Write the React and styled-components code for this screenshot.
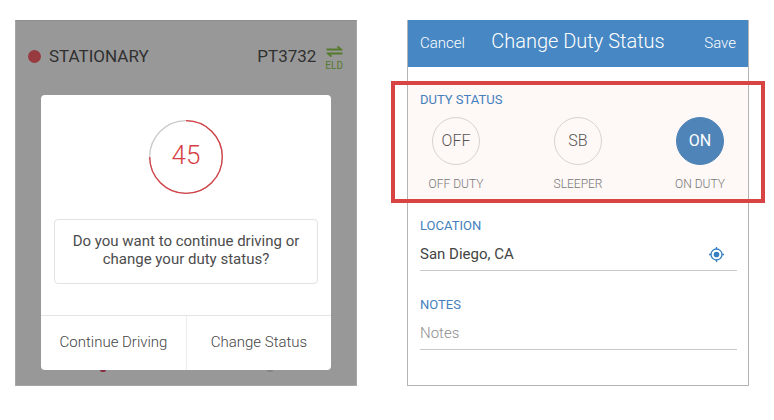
import { useState } from 'react'
import styled, { createGlobalStyle } from 'styled-components'


const GlobalStyle = createGlobalStyle`
  * {
    box-sizing: border-box;
  }

  body {
    margin: 0;
    background: white;
    font-family: Roboto, 'Liberation Sans', sans-serif;
  }

  button, input {
    font-family: inherit;
  }
`

const Page = styled.main`
  display: grid;
  grid-template-columns: 1fr 1fr;
  gap: 50px;
  padding: 20px 25px 20px 15px;
`

// Driving prompt

const DrivingScreen = styled.section`
  display: flex;
  flex-direction: column;
  padding: 0 25px 13px;
  background: #989898;
  border: 1px solid #a6a6a6;
  border-top-color: #8e8e8e;
`

const StatusBar = styled.header`
  display: flex;
  align-items: center;
  margin: 0 -13px;
  padding: 0 1px 4px 0;
  height: 74px;
  color: #303030;
  font-size: 17px;
`

const StatusDot = styled.span`
  width: 13px;
  height: 13px;
  margin-right: 8px;
  border-radius: 999px;
  background: #983b40;
`

const Vehicle = styled.span`
  margin-left: auto;
`

const Eld = styled.span`
  display: flex;
  flex-direction: column;
  align-items: center;
  gap: 3px;
  margin-left: 9px;
  padding-top: 6px;
  color: #557a2c;
  font-size: 10px;
  line-height: 12px;
`

const Dialog = styled.div`
  display: flex;
  flex-direction: column;
  align-items: center;
  padding-top: 25px;
  background: white;
  border-radius: 4px;
`

const Timer = styled.div`
  display: grid;
  place-items: center;
  width: 74px;
  height: 74px;
  color: #d63f45;
  font-size: 26px;
  font-weight: 300;

  svg, span {
    grid-area: 1 / 1;
  }

  span {
    padding-bottom: 5px;
  }
`

const Question = styled.p`
  align-self: stretch;
  margin: 25px 13px 31px;
  padding: 12px 16px 15px;
  border: 1px solid #e2e2e2;
  border-radius: 4px;
  color: #4c4c4c;
  font-size: 15px;
  line-height: 18px;
  text-align: center;
`

const Actions = styled.div`
  display: grid;
  grid-template-columns: 1fr 1fr;
  align-self: stretch;
  border-top: 1px solid #e4e4e4;
`

const Action = styled.button`
  height: 54px;
  padding: 0 0 3px;
  border: 0;
  background: none;
  color: #444;
  font-size: 15px;
  font-weight: 300;

  & + & {
    border-left: 1px solid #ececec;
  }
`

const Tips = styled.div`
  display: flex;
  justify-content: space-between;
  padding: 0 58px 0 59px;
`

const Tip = styled.span`
  width: 6px;
  height: 2px;
  border-radius: 0 0 4px 4px;
  background: ${({ $color }) => $color};
`

// Duty status form

const FormScreen = styled.form`
  padding-bottom: 35px;
  border: 1px solid #b4b4b4;
`

const TitleBar = styled.header`
  display: grid;
  grid-template-columns: 1fr auto 1fr;
  align-items: center;
  height: 47px;
  margin: -1px 0 14px;
  padding: 0 12px 2px;
  background: #4787c3;
  color: white;
`

const Title = styled.h1`
  margin: 0;
  padding-bottom: 3px;
  font-size: 20px;
  font-weight: 300;
`

const BarButton = styled.button`
  justify-self: ${({ $side }) => $side};
  padding: 0;
  border: 0;
  background: none;
  color: white;
  font-size: 15px;
  font-weight: 300;
`

const DutyStatus = styled.fieldset`
  position: relative;
  min-width: 0;
  margin: 0;
  padding: 11px 12px;
  border: 0;
  background: #fef8f6;

  // frame hangs out over both edges of the screen
  &::after {
    content: '';
    position: absolute;
    inset: 0 -17px;
    border: 4px solid #d84343;
    pointer-events: none;
  }
`

const Legend = styled.legend`
  float: left;
  width: 100%;
  padding: 0;
  color: #4580bd;
  font-size: 13px;
  line-height: 16px;
`

const Options = styled.div`
  clear: both;
  display: flex;
  justify-content: space-between;
  padding-top: 9px;
`

const Option = styled.label`
  display: flex;
  flex-direction: column;
  align-items: center;
  gap: 11px;
  width: 72px;
  color: #777;
  font-size: 12px;
  font-weight: 300;
  line-height: 16px;
  cursor: pointer;
`

const Radio = styled.input`
  appearance: none;
  display: grid;
  place-items: center;
  width: 48px;
  height: 48px;
  margin: 0;
  border: 1px solid #d8d3d2;
  border-radius: 999px;
  color: #555;
  font-size: 16px;
  font-weight: 300;
  line-height: 20px;
  cursor: pointer;

  &::before {
    content: attr(data-code);
  }

  &:checked {
    border-color: #4f84b8;
    background: #4f84b8;
    color: white;
    font-weight: 400;
  }
`

const Field = styled.div`
  margin: 0 11px 0 12px;
  padding-top: ${({ $top }) => $top}px;
`

const FieldLabel = styled.label`
  display: block;
  color: #4580bd;
  font-size: 13px;
  line-height: 16px;
`

const FieldRow = styled.div`
  display: flex;
  align-items: center;
  height: 37px;
  border-bottom: 1px solid #c8c8c8;
`

const TextInput = styled.input`
  flex: 1;
  min-width: 0;
  padding: 3px 0 0;
  border: 0;
  outline: 0;
  background: none;
  color: #444;
  font-size: 15px;

  &::placeholder {
    color: #8e8e8e;
    font-weight: 300;
  }
`

const LocateButton = styled.button`
  display: flex;
  margin-right: 13px;
  padding: 4px 0 0;
  border: 0;
  background: none;
`


let statuses = [
  { code: 'OFF', name: 'OFF DUTY' },
  { code: 'SB', name: 'SLEEPER' },
  { code: 'ON', name: 'ON DUTY' }
]


function TransferIcon() {
  return (
    <svg width="17" height="11" viewBox="0 0 17 11" fill="currentColor">
      <path d="M0.5 2.6H12.6L10.6 0.8L12.4 0L16.5 3.4V4.4H0.5Z" />
      <path d="M16.5 8.4H4.4L6.4 10.2L4.6 11L0.5 7.6V6.6H16.5Z" />
    </svg>
  )
}

function LocateIcon() {
  return (
    <svg width="15" height="15" viewBox="0 0 15 15" fill="none" stroke="#347fc1" strokeWidth="1.3">
      <circle cx="7.5" cy="7.5" r="5.5" />
      <circle cx="7.5" cy="7.5" r="2.8" fill="#347fc1" stroke="none" />
      <path d="M7.5 0V2.2M7.5 12.8V15M0 7.5H2.2M12.8 7.5H15" />
    </svg>
  )
}

function DrivingPrompt() {
  return (
    <DrivingScreen>
      <StatusBar>
        <StatusDot />
        <span>STATIONARY</span>
        <Vehicle>PT3732</Vehicle>
        <Eld>
          <TransferIcon />
          ELD
        </Eld>
      </StatusBar>
      <Dialog role="dialog" aria-labelledby="question">
        <Timer>
          <svg width="74" height="74" viewBox="0 0 74 74" fill="none" strokeWidth="1.3">
            <circle cx="37" cy="37" r="36.3" stroke="#c9c9c9" />
            <path d="M37 0.7A36.3 36.3 0 1 1 0.7 37" stroke="#d63f45" />
          </svg>
          <span>45</span>
        </Timer>
        <Question id="question">
          Do you want to continue driving or change your duty status?
        </Question>
        <Actions>
          <Action type="button">Continue Driving</Action>
          <Action type="button">Change Status</Action>
        </Actions>
      </Dialog>
      <Tips>
        <Tip $color="#8a2f3f" />
        <Tip $color="#848484" />
      </Tips>
    </DrivingScreen>
  )
}

function DutyForm() {
  let [status, setStatus] = useState('ON')
  let [location, setLocation] = useState('San Diego, CA')
  let [notes, setNotes] = useState('')

  return (
    <FormScreen onSubmit={e => e.preventDefault()}>
      <TitleBar>
        <BarButton type="button" $side="start">Cancel</BarButton>
        <Title>Change Duty Status</Title>
        <BarButton type="submit" $side="end">Save</BarButton>
      </TitleBar>

      <DutyStatus>
        <Legend>DUTY STATUS</Legend>
        <Options>
          {statuses.map(item =>
            <Option key={item.code}>
              <Radio
                type="radio"
                name="status"
                data-code={item.code}
                checked={status === item.code}
                onChange={() => setStatus(item.code)}
              />
              {item.name}
            </Option>
          )}
        </Options>
      </DutyStatus>

      <Field $top={15}>
        <FieldLabel htmlFor="location">LOCATION</FieldLabel>
        <FieldRow>
          <TextInput id="location" value={location} onChange={e => setLocation(e.target.value)} />
          <LocateButton type="button" aria-label="Use current location">
            <LocateIcon />
          </LocateButton>
        </FieldRow>
      </Field>

      <Field $top={26}>
        <FieldLabel htmlFor="notes">NOTES</FieldLabel>
        <FieldRow>
          <TextInput id="notes" placeholder="Notes" value={notes} onChange={e => setNotes(e.target.value)} />
        </FieldRow>
      </Field>
    </FormScreen>
  )
}


export default function App() {
  return (
    <>
      <GlobalStyle />
      <Page>
        <DrivingPrompt />
        <DutyForm />
      </Page>
    </>
  )
}
